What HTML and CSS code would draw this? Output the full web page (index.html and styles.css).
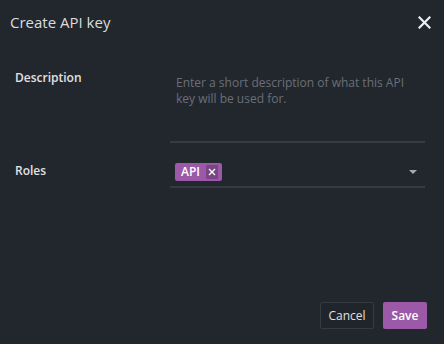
FILE: index.html
```html
<!DOCTYPE html>
<html>
<head>
<meta charset="utf-8">
<link rel="stylesheet" href="styles.css">
</head>
<body>
<div class="dialog">
  <div class="header">
    <div class="title">Create API key</div>
    <svg class="close" width="13" height="13" viewBox="0 0 13 13"><path d="M1.5 1.5 L11.5 11.5 M11.5 1.5 L1.5 11.5" stroke="#eeeeee" stroke-width="2.2" stroke-linecap="square"/></svg>
  </div>
  <div class="body">
    <div class="row desc-row">
      <div class="label">Description</div>
      <div class="field desc-field">
        <div class="placeholder">Enter a short description of what this API key will be used for.</div>
      </div>
    </div>
    <div class="row roles-row">
      <div class="label">Roles</div>
      <div class="field roles-field">
        <span class="chip"><span class="chip-text">API</span><span class="chip-x"><svg width="8" height="8" viewBox="0 0 8 8"><path d="M1 1 L7 7 M7 1 L1 7" stroke="#ffffff" stroke-width="1.4"/></svg></span></span>
        <span class="caret"></span>
      </div>
    </div>
  </div>
  <div class="footer">
    <button class="btn cancel">Cancel</button>
    <button class="btn save">Save</button>
  </div>
</div>
</body>
</html>
```
FILE: styles.css
```css
* { box-sizing: border-box; }
html, body { margin: 0; padding: 0; }
body {
  background: #22272e;
  font-family: "Open Sans", "Liberation Sans", sans-serif;
  color: #dddddd;
}
.dialog {
  width: 444px;
  height: 344px;
  display: flex;
  flex-direction: column;
}
.header {
  display: flex;
  justify-content: space-between;
  align-items: center;
  height: 43px;
  padding: 0 13px 0 10px;
}
.title {
  font-size: 15px;
  color: #dcdcdc;
  line-height: 24px;
}
.close { display: block; margin-top: 1px; }
.body {
  flex: 1;
  padding: 0 19px 0 15px;
}
.row {
  display: grid;
  grid-template-columns: 155px 1fr;
}
.label {
  font-size: 12px;
  font-weight: 600;
  color: #e2e2e2;
  line-height: 17px;
}
.desc-row { padding-top: 26px; }
.field {
  border-bottom: 2px solid #363b43;
}
.desc-field {
  height: 74px;
  padding: 6px 6px 0 6px;
}
.placeholder {
  font-size: 12px;
  line-height: 16px;
  color: #6a6f77;
  width: 240px;
}
.roles-row { padding-top: 19px; }
.roles-field {
  height: 26px;
  display: flex;
  align-items: flex-start;
  justify-content: space-between;
  padding: 1px 8px 0 5px;
}
.chip {
  display: inline-flex;
  align-items: center;
  height: 18px;
  background: #9b59a7;
  border-radius: 2px;
  color: #ffffff;
  font-size: 12px;
  font-weight: 600;
  padding: 0 4px 0 6px;
  line-height: 18px;
}
.chip-text { margin-right: 6px; }
.chip-x {
  display: inline-flex;
  align-items: center;
  justify-content: center;
  width: 12px;
  height: 14px;
  background: #7a4585;
  border-radius: 1px;
}
.chip-x svg { display: block; }
.caret {
  width: 0;
  height: 0;
  border-left: 4px solid transparent;
  border-right: 4px solid transparent;
  border-top: 4px solid #a9a9ab;
  margin-top: 7px;
}
.footer {
  display: flex;
  justify-content: flex-end;
  gap: 9px;
  padding: 0 17px 15px 0;
}
.btn {
  height: 27px;
  font-family: "Open Sans", "Liberation Sans", sans-serif;
  font-size: 12px;
  border-radius: 2px;
  padding: 0;
  cursor: pointer;
}
.cancel {
  width: 54px;
  background: #20252b;
  border: 1px solid #363b43;
  color: #e0e0e0;
}
.save {
  width: 44px;
  background: #9b59a7;
  border: none;
  color: #ffffff;
  font-weight: 600;
}
```
